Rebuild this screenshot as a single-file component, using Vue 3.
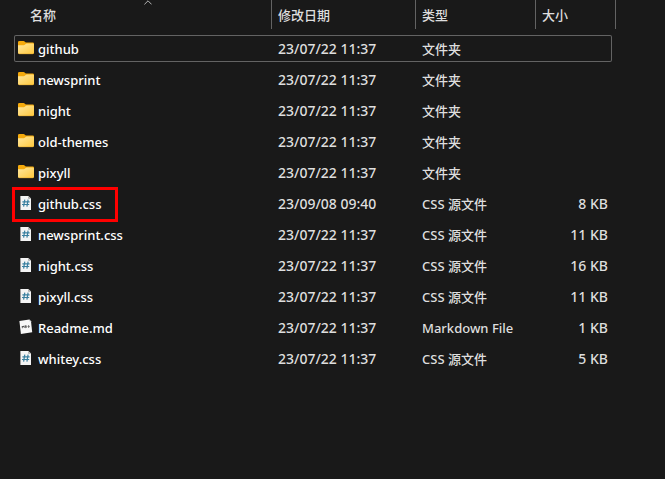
<script setup>
import { ref } from 'vue'

const columns = [
  { key: 'name', label: '名称', sorted: true },
  { key: 'date', label: '修改日期' },
  { key: 'type', label: '类型' },
  { key: 'size', label: '大小' },
]

const files = [
  { name: 'github', icon: 'folder', date: '23/07/22 11:37', type: '文件夹', size: '' },
  { name: 'newsprint', icon: 'folder', date: '23/07/22 11:37', type: '文件夹', size: '' },
  { name: 'night', icon: 'folder', date: '23/07/22 11:37', type: '文件夹', size: '' },
  { name: 'old-themes', icon: 'folder', date: '23/07/22 11:37', type: '文件夹', size: '' },
  { name: 'pixyll', icon: 'folder', date: '23/07/22 11:37', type: '文件夹', size: '' },
  { name: 'github.css', icon: 'css', date: '23/09/08 09:40', type: 'CSS 源文件', size: '8 KB', marked: true },
  { name: 'newsprint.css', icon: 'css', date: '23/07/22 11:37', type: 'CSS 源文件', size: '11 KB' },
  { name: 'night.css', icon: 'css', date: '23/07/22 11:37', type: 'CSS 源文件', size: '16 KB' },
  { name: 'pixyll.css', icon: 'css', date: '23/07/22 11:37', type: 'CSS 源文件', size: '11 KB' },
  { name: 'Readme.md', icon: 'md', date: '23/07/22 11:37', type: 'Markdown File', size: '1 KB' },
  { name: 'whitey.css', icon: 'css', date: '23/07/22 11:37', type: 'CSS 源文件', size: '5 KB' },
]

const focused = ref('github')
</script>

<template>
  <main class="explorer">
    <table class="files">
      <thead>
        <tr class="head">
          <th v-for="col in columns" :key="col.key" :class="col.key" scope="col">
            <button type="button">{{ col.label }}</button>
            <svg v-if="col.sorted" class="sort" width="8" height="5" viewBox="0 0 8 5" aria-hidden="true">
              <path d="M0.4 4.4 4 0.8 7.6 4.4" fill="none" stroke="#b4b4b4" />
            </svg>
          </th>
        </tr>
      </thead>
      <tbody>
        <tr
          v-for="file in files"
          :key="file.name"
          class="row"
          :class="{ focused: focused === file.name }"
          @click="focused = file.name"
        >
          <td class="name" :class="{ marked: file.marked }">
            <svg v-if="file.icon === 'folder'" class="icon" width="16" height="16" viewBox="0 0 16 16" aria-hidden="true">
              <defs>
                <linearGradient :id="'g-' + file.name" x1="0" y1="0" x2="1" y2="1">
                  <stop offset="0" stop-color="#ffe8a0" />
                  <stop offset="1" stop-color="#ffc83c" />
                </linearGradient>
              </defs>
              <path d="M0 2.3Q0 1 1.3 1H5.6Q6.2 1 6.6 1.4L7.8 2.5H14.8Q16 2.5 16 3.7V8H0Z" fill="#f5aa0c" />
              <path d="M0 5.2H5.8Q6.4 5.2 6.8 4.8L7.7 3.9Q8 3.6 8.6 3.6H14.8Q16 3.6 16 4.6V12.8Q16 14 14.8 14H1.2Q0 14 0 12.8Z" :fill="`url(#g-${file.name})`" />
              <path d="M0.3 13.1Q0.6 13.8 1.3 13.8H14.7Q15.4 13.8 15.7 13.1" fill="none" stroke="#dfa52a" stroke-width="0.5" />
            </svg>
            <svg v-else-if="file.icon === 'css'" class="icon" width="16" height="16" viewBox="0 0 16 16" aria-hidden="true">
              <path d="M2.4 1H10.4L13 3.6V15H2.4Z" fill="#f4f4f4" />
              <path d="M10.2 1V3.8H13Z" fill="#a4a4a4" />
              <path d="M6.8 4.6 5.6 11.6M10.1 4.6 8.9 11.6M4.4 6.8H11.6M4 9.5H11.2" fill="none" stroke="#397f9f" stroke-width="1.2" />
            </svg>
            <svg v-else class="icon" width="16" height="16" viewBox="0 0 16 16" aria-hidden="true">
              <path d="M1.4 1.9 11.4 0.4 13 2.2 14.2 13.2 2.9 14.9Z" fill="#f7f7f7" />
              <path d="M11.4 0.4 11.6 2.4 13 2.2Z" fill="#bdbdbd" />
              <path d="M4.4 9.2 4.2 7 5.2 8 6 6.8 6.3 8.9M7.4 6.7 7.6 8.7Q9 8.4 8.8 7.4 8.6 6.5 7.4 6.7ZM10.6 6.2 10.8 8.3M9.9 7.6 10.8 8.3 11.5 7.4" fill="none" stroke="#3d3d3d" stroke-width="0.8" />
            </svg>
            <span>{{ file.name }}</span>
          </td>
          <td class="date">{{ file.date }}</td>
          <td class="type">{{ file.type }}</td>
          <td class="size">{{ file.size }}</td>
        </tr>
      </tbody>
    </table>
  </main>
</template>

<style>
body {
  background: #191919;
}
</style>

<style scoped>
.explorer {
  min-height: 100vh;
  box-sizing: border-box;
  padding: 0 53px 16px 14px;
  background: #191919;
  color: #dedede;
  font: 500 13px/20px "Noto Sans", "Noto Sans CJK SC", sans-serif;
}

.files,
thead {
  display: block;
}

tbody {
  display: flex;
  flex-direction: column;
  gap: 4px;
}

.head,
.row {
  display: grid;
  grid-template-columns: 258fr 144fr 120fr 76fr;
}

.head {
  grid-template-columns: 258fr 144fr 120fr 76fr 4px;
  height: 29px;
  margin: 0 -4px 6px 0;
}

th {
  position: relative;
  display: flex;
  padding: 0;
  border-right: 1px solid #636363;
}

th.size {
  grid-column: span 2;
}

th button {
  flex: 1;
  padding: 0 6px;
  border: 0;
  background: none;
  color: #dedede;
  font: 500 13px/20px "Noto Sans CJK SC", sans-serif;
  text-align: left;
}

th.name button {
  padding-left: 16px;
}

.sort {
  position: absolute;
  top: 0;
  left: calc(50% + 1px);
}

.row {
  box-sizing: border-box;
  height: 27px;
  border-radius: 2px;
  align-items: center;
}

.row.focused {
  box-shadow: inset 0 0 0 1px #636363;
}

td {
  padding: 0 4px 0 6px;
  white-space: pre;
}

td.name {
  position: relative;
  display: flex;
  gap: 4px;
  padding-left: 4px;
  color: #fff;
}

.icon {
  flex: none;
  margin-top: 1px;
}

td.date,
td.size {
  font-size: 14px;
}

td.size {
  text-align: right;
}

.marked::after {
  content: "";
  position: absolute;
  top: -7px;
  left: -2px;
  width: 100px;
  height: 29px;
  border: 3px solid #f00;
}
</style>
